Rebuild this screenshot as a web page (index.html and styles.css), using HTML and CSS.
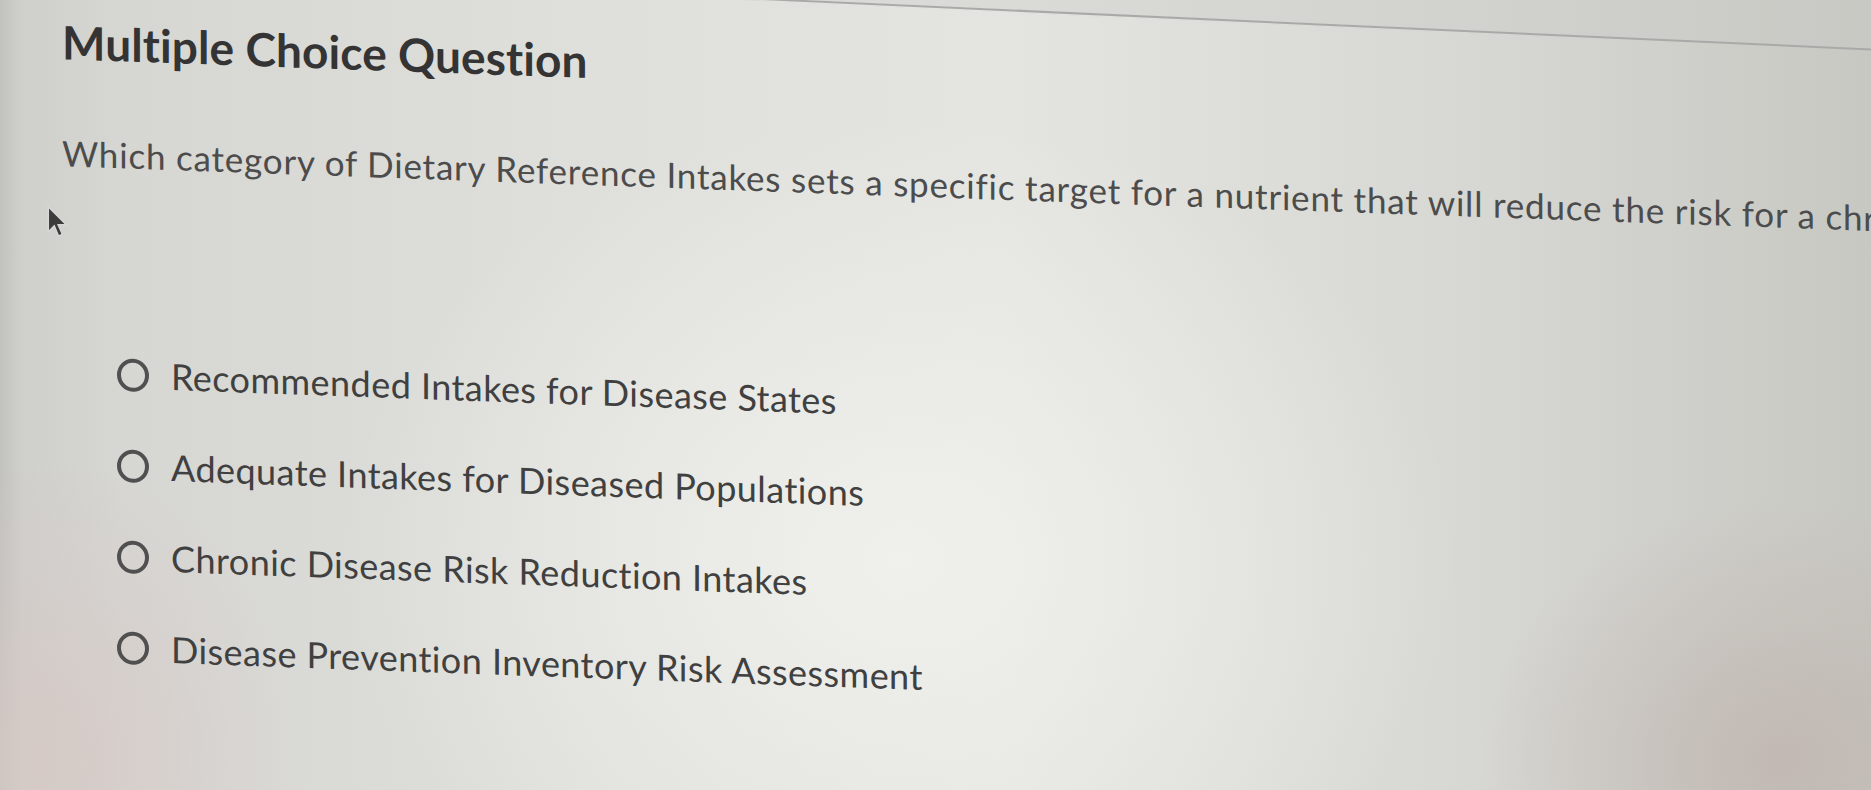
FILE: index.html
```html
<!DOCTYPE html>
<html lang="en">
<head>
<meta charset="utf-8">
<title>Multiple Choice Question</title>
<link rel="stylesheet" href="styles.css">
</head>
<body>
<div class="screen">
  <div class="edge"></div>
  <main class="question">
    <h1 class="title">Multiple Choice Question</h1>
    <p class="prompt">Which category of Dietary Reference Intakes sets a specific target for a nutrient that will reduce the risk for a chronic disease?</p>
    <ul class="choices">
      <li class="choice"><span class="radio"></span><span class="label">Recommended Intakes for Disease States</span></li>
      <li class="choice"><span class="radio"></span><span class="label">Adequate Intakes for Diseased Populations</span></li>
      <li class="choice"><span class="radio"></span><span class="label">Chronic Disease Risk Reduction Intakes</span></li>
      <li class="choice"><span class="radio"></span><span class="label">Disease Prevention Inventory Risk Assessment</span></li>
    </ul>
  </main>
  <svg class="cursor" width="24" height="32" viewBox="0 0 22 30">
    <path d="M2 1 L2 24 L7.5 18.5 L11.5 28 L15 26.5 L11 17.5 L18.5 17.5 Z" fill="#3c3c3c" stroke="#d8d8d6" stroke-width="1.2"/>
  </svg>
</div>
</body>
</html>
```

FILE: styles.css
```css
html, body {
  margin: 0;
  padding: 0;
  width: 1871px;
  height: 790px;
  overflow: hidden;
}

body {
  font-family: Lato, "Open Sans", "Liberation Sans", sans-serif;
}

.screen {
  position: relative;
  width: 1871px;
  height: 790px;
  overflow: hidden;
  background:
    radial-gradient(ellipse 560px 440px at 900px 560px, rgba(241,241,237,0.9), rgba(241,241,237,0) 100%),
    radial-gradient(ellipse 300px 260px at 1780px 760px, rgba(190,178,172,0.75), rgba(190,178,172,0) 100%),
    radial-gradient(ellipse 260px 300px at 40px 760px, rgba(214,200,196,0.8), rgba(214,200,196,0) 100%),
    linear-gradient(90deg, #c2c2bf 0px, #cfcfcc 22px, #d6d6d3 120px, #dfdfdc 600px, #e4e4e0 1000px, #d6d6d2 1500px, #c8c8c3 1871px);
}

.edge {
  position: absolute;
  left: 760px;
  top: -2px;
  width: 1140px;
  height: 1px;
  border-top: 2px solid #a9aaa8;
  transform-origin: 0 0;
  transform: rotate(2.6deg);
  box-shadow: 0 -30px 0 30px rgba(200,201,199,0.35);
}

.question {
  padding: 12px 0 0 62px;
  transform-origin: 0 0;
  transform: skewY(2.05deg);
}

.title {
  margin: 0;
  font-size: 46px;
  line-height: 56px;
  font-weight: 700;
  color: #343434;
  letter-spacing: 0.1px;
}

.prompt {
  margin: 61px 0 0 0;
  font-size: 35px;
  line-height: 42px;
  font-weight: 400;
  color: #4c4c4c;
  letter-spacing: 0.8px;
  white-space: nowrap;
}

.choices {
  list-style: none;
  margin: 178px 0 0 55px;
  padding: 0;
  display: flex;
  flex-direction: column;
  gap: 48px;
}

.choice {
  display: flex;
  align-items: center;
  gap: 22px;
  height: 43px;
}

.radio {
  width: 24px;
  height: 25px;
  border: 4px solid #505050;
  border-radius: 50%;
  flex: none;
}

.label {
  font-size: 36px;
  line-height: 43px;
  color: #404040;
  letter-spacing: 0.45px;
  white-space: nowrap;
}

.cursor {
  position: absolute;
  left: 46px;
  top: 206px;
}
```
